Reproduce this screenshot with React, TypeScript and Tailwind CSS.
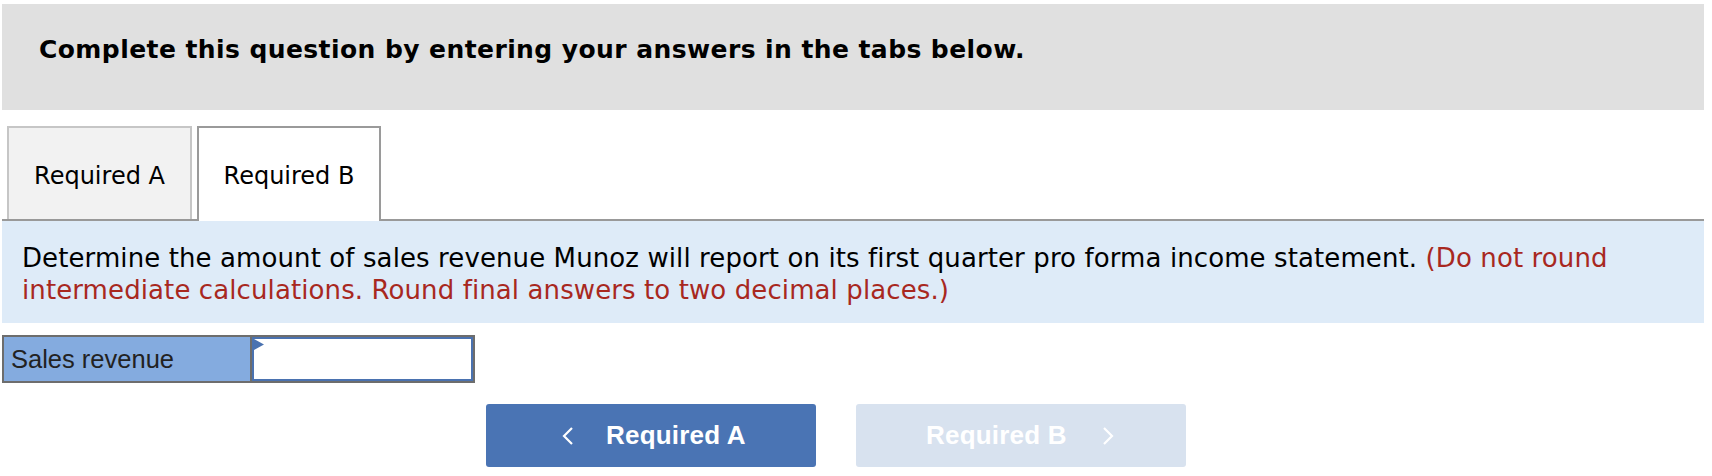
import React from "react";

export default function App() {
  const verdana = { fontFamily: '"DejaVu Sans", Verdana, sans-serif' };
  const arial = { fontFamily: '"Liberation Sans", Arial, Helvetica, sans-serif' };
  return (
    <div className="w-[1712px] h-[476px] bg-white overflow-hidden relative">
      {/* Header */}
      <div
        className="mt-[4px] ml-[2px] w-[1702px] h-[106px] bg-[#e0e0e0] flex items-start pt-[30px] pl-[37px] text-black font-bold text-[25px] tracking-[0.42px] leading-[32px]"
        style={verdana}
      >
        Complete this question by entering your answers in the tabs below.
      </div>

      {/* Tabs */}
      <div className="mt-[16px] ml-[2px] w-[1702px] flex items-end border-b-2 border-[#999999] h-[95px]" style={verdana}>
        <div className="ml-[5px] w-[185px] h-[93px] bg-[#f2f2f2] border-2 border-b-0 border-[#c6c6c6] flex items-center justify-center pt-[4px] text-[24px] text-black">
          Required A
        </div>
        <div className="ml-[5px] w-[184px] h-[95px] -mb-[2px] bg-white border-2 border-b-0 border-[#9a9a9a] flex items-center justify-center pt-[2px] text-[24px] text-black">
          Required B
        </div>
      </div>

      {/* Instruction panel */}
      <div
        className="ml-[2px] w-[1702px] h-[102px] bg-[#deebf8] pl-[20px] pr-[20px] pt-[21px] text-[26px] tracking-[0.1px] leading-[32px] text-black"
        style={verdana}
      >
        <p>
          Determine the amount of sales revenue Munoz will report on its first quarter pro forma income statement.{" "}
          <span className="text-[#a8281f]">
            (Do not round intermediate calculations. Round final answers to two decimal places.)
          </span>
        </p>
      </div>

      {/* Sales revenue row */}
      <div className="mt-[12px] ml-[2px] w-[473px] h-[48px] border-2 border-[#6d6d6d] flex" style={arial}>
        <div className="w-[248px] h-full bg-[#84abdf] border-r-2 border-[#6d6d6d] flex items-center pl-[7px] text-[25.5px] text-[#222222]">
          Sales revenue
        </div>
        <div className="flex-1 h-full border-2 border-[#4a72b0] bg-white relative">
          <svg className="absolute left-0 top-0" width="10" height="11" viewBox="0 0 10 11">
            <polygon points="0,0 10,5.5 0,11" fill="#4a72b0" />
          </svg>
        </div>
      </div>

      {/* Nav buttons */}
      <div className="mt-[21px] flex pl-[486px] gap-[40px]" style={arial}>
        <div className="w-[330px] h-[63px] rounded-[3px] bg-[#4a74b4] flex items-center text-white font-bold text-[26px] tracking-[0.2px]">
          <svg className="ml-[76px]" width="12" height="18" viewBox="0 0 12 18">
            <polyline points="10,1 2,9 10,17" fill="none" stroke="white" strokeWidth="2.2" />
          </svg>
          <span className="ml-[32px]">Required A</span>
        </div>
        <div className="w-[330px] h-[63px] rounded-[3px] bg-[#d8e2ef] flex items-center text-white font-bold text-[26px] tracking-[0.2px]">
          <span className="ml-[70px]">Required B</span>
          <svg className="ml-[35px]" width="12" height="18" viewBox="0 0 12 18">
            <polyline points="2,1 10,9 2,17" fill="none" stroke="white" strokeWidth="2.2" />
          </svg>
        </div>
      </div>
    </div>
  );
}
